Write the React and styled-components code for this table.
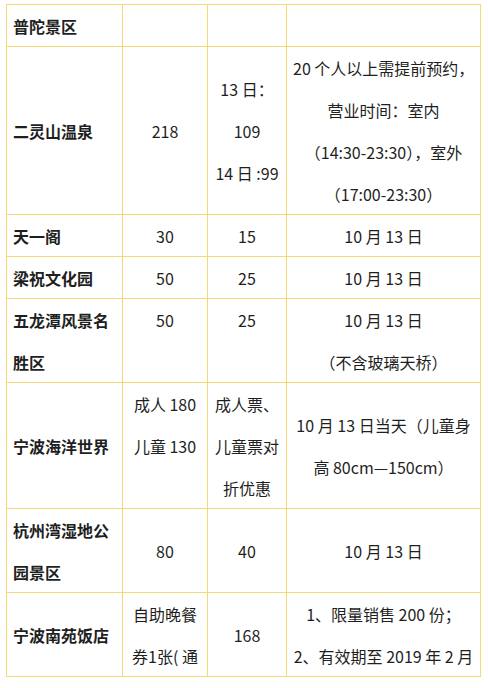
import React from 'react';
import styled, { createGlobalStyle } from 'styled-components';

const GlobalStyle = createGlobalStyle`
  html, body {
    margin: 0;
    padding: 0;
    background: #fff;
  }
`;

const Page = styled.div`
  padding: 4px 6px 0 6px;
  font-family: "Noto Sans CJK SC", "Noto Sans", sans-serif;
  color: #1f1f1f;
`;

const Table = styled.table`
  width: 475px;
  border-collapse: collapse;
  table-layout: fixed;

  td:nth-child(1) { width: 103px; }
  td:nth-child(2) { width: 72px; }
  td:nth-child(3) { width: 66px; }
`;

const Cell = styled.td`
  border: 1px solid #f6d877;
  padding: 0 6px;
  font-size: 16px;
  line-height: 42px;
  text-align: ${(p) => (p.$left ? 'left' : 'center')};
  vertical-align: ${(p) => (p.$top ? 'top' : 'middle')};
  font-weight: ${(p) => (p.$bold ? 700 : 400)};
  white-space: nowrap;
  overflow: hidden;
`;

const Line = styled.div`
  height: 42px;
  &:last-child {
    height: 41px;
  }
`;

const rows = [
  { name: ['普陀景区'], a: [], b: [], c: [] },
  {
    name: ['二灵山温泉'],
    a: ['218'],
    b: ['13 日：', '109', '14 日 :99'],
    c: ['20 个人以上需提前预约，', '营业时间：室内', '（14:30-23:30），室外', '（17:00-23:30）'],
  },
  { name: ['天一阁'], a: ['30'], b: ['15'], c: ['10 月 13 日'] },
  { name: ['梁祝文化园'], a: ['50'], b: ['25'], c: ['10 月 13 日'] },
  {
    name: ['五龙潭风景名', '胜区'],
    a: ['50'],
    b: ['25'],
    c: ['10 月 13 日', '（不含玻璃天桥）'],
    top: ['a', 'b'],
  },
  {
    name: ['宁波海洋世界'],
    a: ['成人 180', '儿童 130'],
    b: ['成人票、', '儿童票对', '折优惠'],
    c: ['10 月 13 日当天（儿童身', '高 80cm—150cm）'],
    top: ['a'],
  },
  { name: ['杭州湾湿地公', '园景区'], a: ['80'], b: ['40'], c: ['10 月 13 日'] },
  {
    name: ['宁波南苑饭店'],
    a: ['自助晚餐', '券1张( 通'],
    b: ['168'],
    c: ['1、限量销售 200 份；', '2、有效期至 2019 年 2 月'],
  },
];

function Lines({ items }) {
  return items.map((t, i) => <Line key={i}>{t}</Line>);
}

export default function App() {
  return (
    <Page>
      <GlobalStyle />
      <Table>
        <tbody>
          {rows.map((r, i) => {
            const top = r.top || [];
            return (
              <tr key={i}>
                <Cell $left $bold>
                  <Lines items={r.name} />
                </Cell>
                <Cell $top={top.includes('a')}>
                  <Lines items={r.a} />
                </Cell>
                <Cell $top={top.includes('b')}>
                  <Lines items={r.b} />
                </Cell>
                <Cell>
                  <Lines items={r.c} />
                </Cell>
              </tr>
            );
          })}
        </tbody>
      </Table>
    </Page>
  );
}
